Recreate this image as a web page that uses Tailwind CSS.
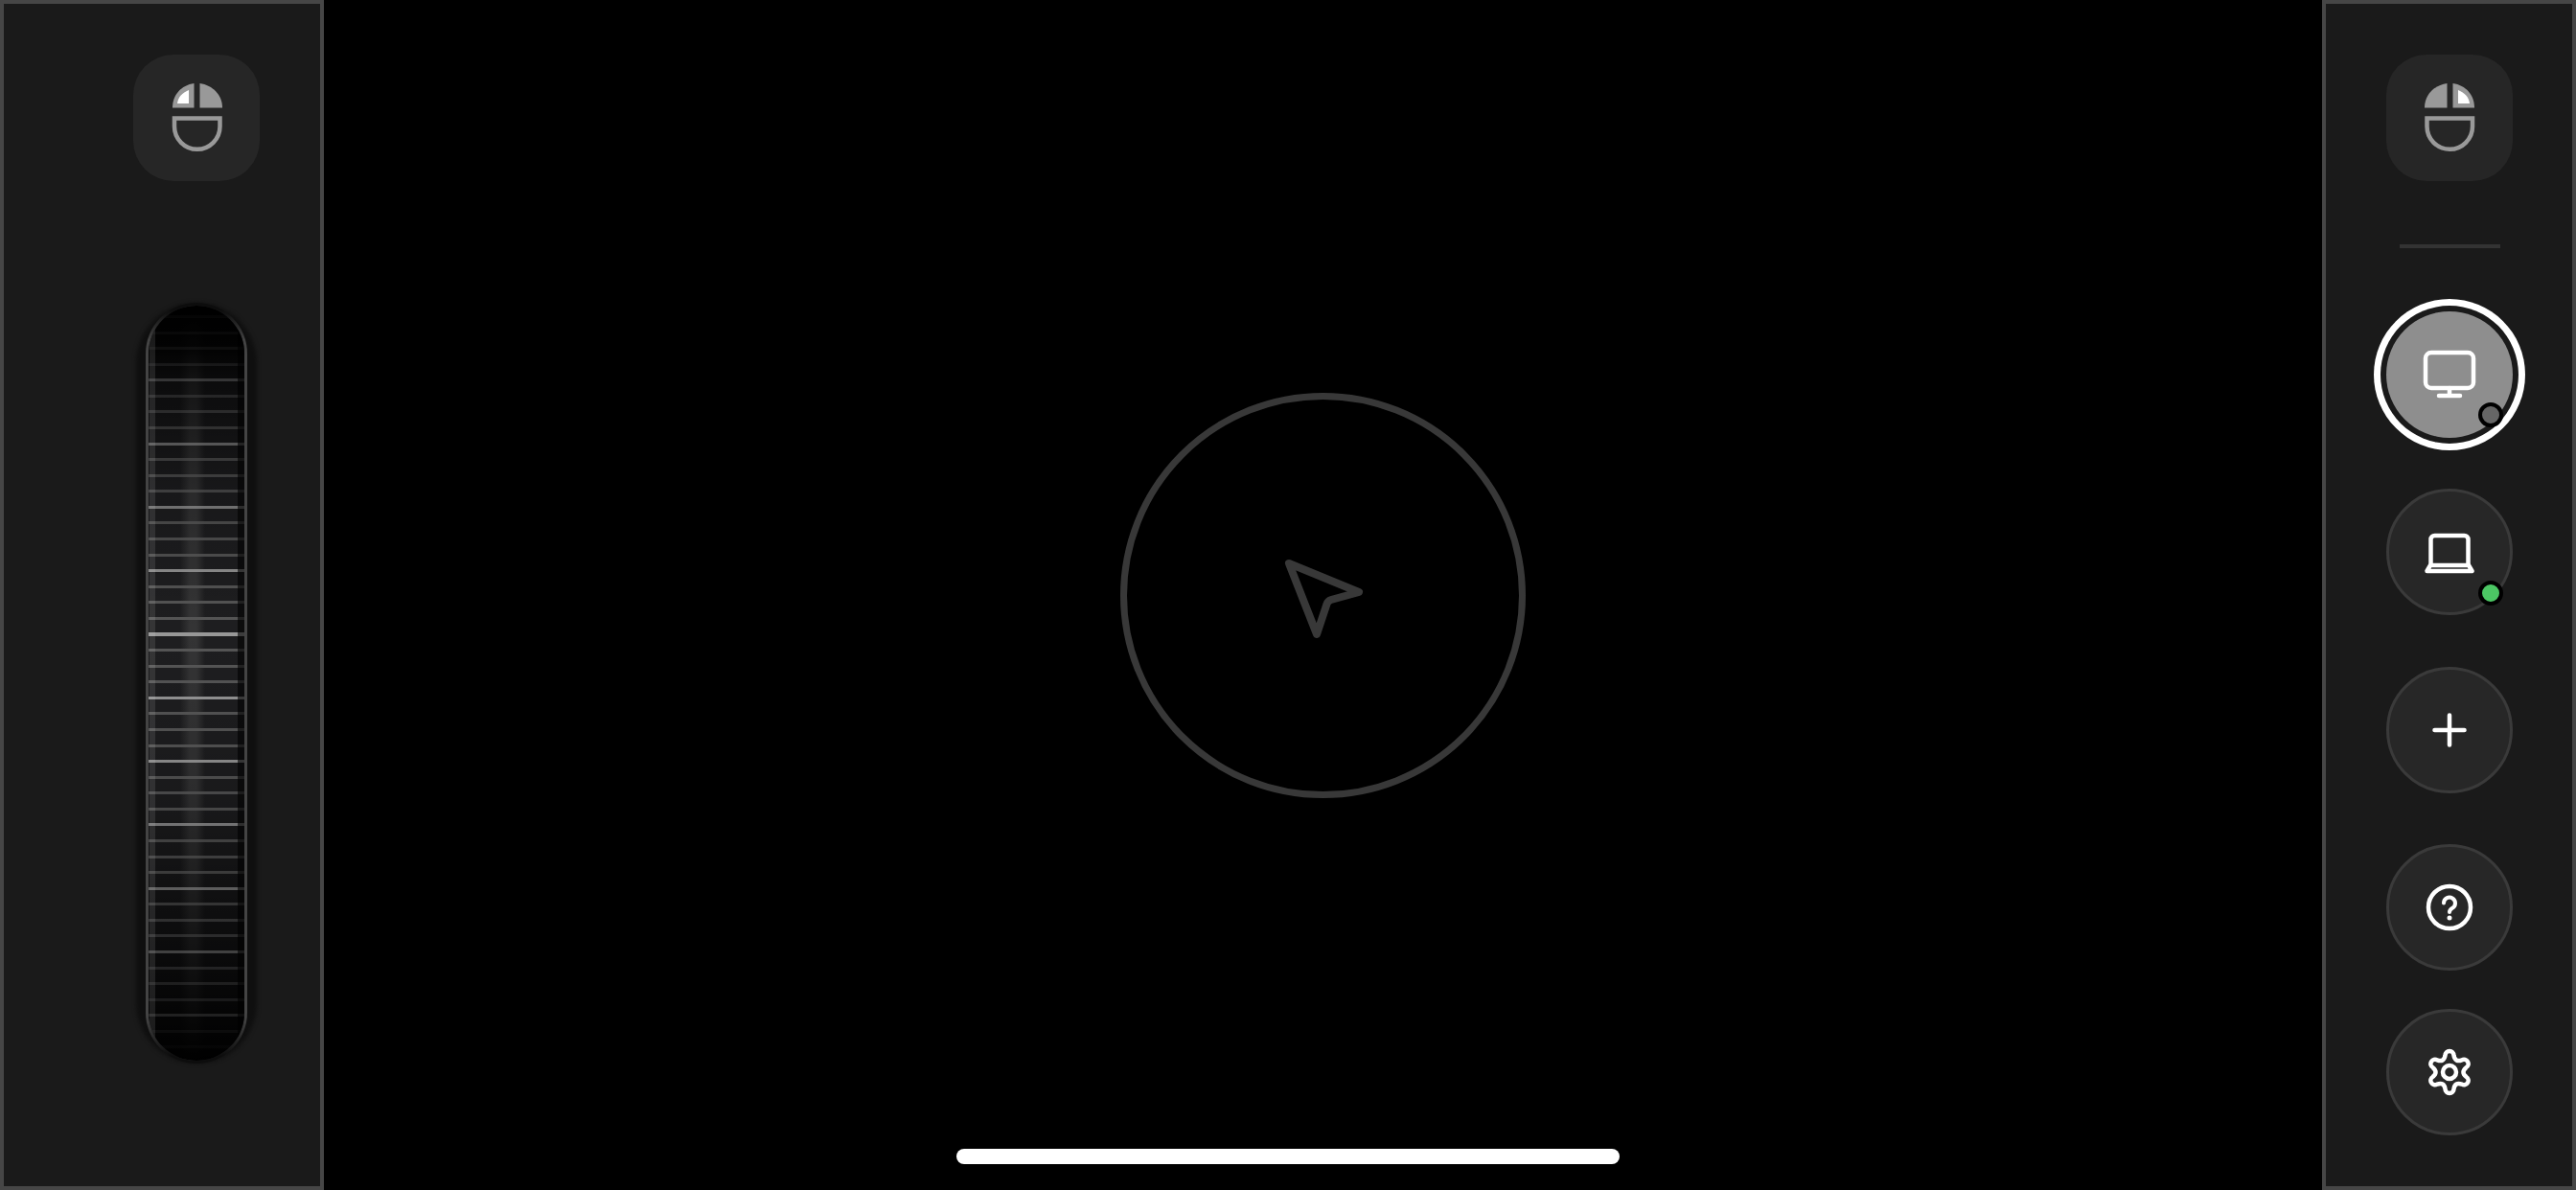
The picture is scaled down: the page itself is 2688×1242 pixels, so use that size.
<!DOCTYPE html>
<html>
<head>
<meta charset="utf-8">
<script src="https://cdn.jsdelivr.net/npm/@tailwindcss/browser@4"></script>
</head>
<body class="bg-black">
<div class="relative flex h-[1242px] w-[2688px] overflow-hidden bg-black">

  <aside class="flex h-full w-[338px] shrink-0 flex-col border-4 border-[#464646] bg-[#1a1a1a] pl-[135px] pt-[53px]">
    <div class="h-[132px] w-[132px] rounded-[42px] bg-[#262626]">
      <svg class="h-[132px] w-[132px]" viewBox="0 0 132 132">
        <g transform="translate(41 30)">
          <path fill="#999" d="M0 25.5C0 12 9 2 22.5 0V25.5Z"/>
          <path fill="#999" d="M28.5 0C42 2 52 12 52 25.5H28.5Z"/>
          <path fill="#fff" d="M5 21C6 14 10 10 17 7V21Z"/>
          <path fill="none" stroke="#999" stroke-width="4.5" d="M2 36.5H49.5V45A23.75 23.75 0 0 1 2 45Z"/>
        </g>
      </svg>
    </div>
    <div class="relative mt-[127px] ml-[13px] h-[794px] w-[106px]">
      <div class="absolute -inset-x-[10px] inset-y-0 rounded-full bg-[#0f0f0f] blur-[2px]"></div>
      <div class="absolute inset-0 overflow-hidden rounded-full bg-[linear-gradient(to_bottom,#0d0d0d_0,#0d0d0d_1%,#444_5%,#444_94%,#0d0d0d_99%,#0d0d0d_100%)] p-[3px]">
        <div class="relative h-full w-full overflow-hidden rounded-full bg-[linear-gradient(to_right,#1e1e20_0,#1e1e20_33%,#343435_43%,#343435_50%,#1e1e20_59%,#1e1e20_100%)]">
          <div class="absolute inset-0 bg-[linear-gradient(to_bottom,#000_0,#000_1%,rgba(0,0,0,.9)_6%,rgba(0,0,0,.62)_10%,rgba(0,0,0,.2)_25%,rgba(0,0,0,0)_43%,rgba(0,0,0,.15)_64%,rgba(0,0,0,.45)_77%,rgba(0,0,0,.8)_92%,#000_100%)]"></div>
          <div class="absolute inset-0 [mask-image:linear-gradient(to_bottom,rgba(0,0,0,0)_0,rgba(0,0,0,.15)_6%,rgba(0,0,0,.3)_10%,rgba(0,0,0,.5)_18%,rgba(0,0,0,.7)_28%,#000_43%,rgba(0,0,0,.85)_60%,rgba(0,0,0,.55)_78%,rgba(0,0,0,.4)_85%,rgba(0,0,0,.25)_92%,rgba(0,0,0,0)_100%)]">
            <div class="absolute inset-x-0 bottom-0 top-[10px] bg-[repeating-linear-gradient(to_bottom,#565656_0,#565656_3px,transparent_3px,transparent_16.575px)]"></div>
            <div class="absolute inset-x-0 bottom-0 top-[10px] bg-[repeating-linear-gradient(to_bottom,#989898_0,#989898_3px,transparent_3px,transparent_66.3px)]"></div>
          </div>
          <div class="absolute inset-y-0 left-[1px] w-[6px] bg-white/10"></div>
          <div class="absolute inset-y-0 right-0 w-[7px] bg-black/60"></div>
        </div>
      </div>
    </div>
  </aside>

  <main class="flex flex-1 items-center justify-center">
    <div class="flex h-[423px] w-[423px] items-center justify-center rounded-full border-[7px] border-[#383838]">
      <svg class="h-[120px] w-[120px]" viewBox="0 0 120 120" fill="none" stroke="#383838" stroke-width="8" stroke-linejoin="round">
        <path d="M24 27L97 57L68 65Q64.500 66 63.500 69.500L53 101Z"/>
      </svg>
    </div>
  </main>

  <aside class="flex h-full w-[265px] shrink-0 flex-col items-center border-4 border-[#464646] bg-[#1a1a1a] pl-[63px] pr-[62px] pt-[53px]">
    <div class="h-[132px] w-[132px] shrink-0 rounded-[42px] bg-[#262626]">
      <svg class="h-[132px] w-[132px]" viewBox="0 0 132 132">
        <g transform="translate(92 30) scale(-1 1)">
          <path fill="#999" d="M0 25.5C0 12 9 2 22.5 0V25.5Z"/>
          <path fill="#999" d="M28.5 0C42 2 52 12 52 25.5H28.5Z"/>
          <path fill="#fff" d="M5 21C6 14 10 10 17 7V21Z"/>
          <path fill="none" stroke="#999" stroke-width="4.5" d="M2 36.5H49.5V45A23.75 23.75 0 0 1 2 45Z"/>
        </g>
      </svg>
    </div>

    <div class="mt-[66px] h-[4px] w-[105px] shrink-0 bg-[#333]"></div>

    <div class="relative mt-[66px] flex h-[132px] w-[132px] shrink-0 items-center justify-center rounded-full bg-[#8e8e8e] shadow-[0_0_0_6px_#1a1a1a,0_0_0_13px_#fff]">
      <svg class="h-[64px] w-[64px]" viewBox="-32 -32 64 64" fill="none" stroke="#fff" stroke-width="4.5" stroke-linecap="round" stroke-linejoin="round">
        <rect x="-25" y="-23" width="50" height="37" rx="6"/>
        <path d="M0 14V22M-11 22H11"/>
      </svg>
      <span class="absolute left-[96px] top-[95px] h-[26px] w-[26px] rounded-full border-4 border-black bg-[#666]"></span>
    </div>

    <div class="relative mt-[53px] flex h-[132px] w-[132px] shrink-0 items-center justify-center rounded-full border-[3px] border-[#3a3a3a] bg-[#272727]">
      <svg class="h-[64px] w-[64px]" viewBox="-32 -32 64 64" fill="none" stroke="#fff" stroke-width="4.5" stroke-linecap="round" stroke-linejoin="round">
        <path d="M-19.5 14V-13A4 4 0 0 1 -15.5 -17H15.5A4 4 0 0 1 19.5 -13V14"/>
        <path d="M-20 14H20L23.5 20H-23.5Z"/>
      </svg>
      <span class="absolute left-[93px] top-[93px] h-[26px] w-[26px] rounded-full border-4 border-black bg-[#4cc764]"></span>
    </div>

    <div class="mt-[54px] flex h-[132px] w-[132px] shrink-0 items-center justify-center rounded-full border-[3px] border-[#3a3a3a] bg-[#272727]">
      <svg class="h-[64px] w-[64px]" viewBox="-32 -32 64 64" fill="none" stroke="#fff" stroke-width="4.5" stroke-linecap="round">
        <path d="M-15.500 0H15.500M0 -15.500V15.500"/>
      </svg>
    </div>

    <div class="mt-[53px] flex h-[132px] w-[132px] shrink-0 items-center justify-center rounded-full border-[3px] border-[#3a3a3a] bg-[#272727]">
      <svg class="h-[64px] w-[64px]" viewBox="-32 -32 64 64" fill="none" stroke="#fff" stroke-linecap="round">
        <circle r="22" stroke-width="4.5"/>
        <path stroke-width="4" d="M-6 -4.500A6 6 0 1 1 3 .800C1 2 0 3 0 5"/>
        <circle cy="11" r="2.500" fill="#fff" stroke="none"/>
      </svg>
    </div>

    <div class="mt-[40px] flex h-[132px] w-[132px] shrink-0 items-center justify-center rounded-full border-[3px] border-[#3a3a3a] bg-[#272727]">
      <svg class="h-[64px] w-[64px]" viewBox="-32 -32 64 64" fill="none" stroke="#fff" stroke-width="4.5" stroke-linejoin="round">
        <path d="M-4.5 -17.5A4.5 4.5 0 0 1 4.5 -17.5Q5.75 -9.96 12.905 -12.647A4.5 4.5 0 0 1 17.405 -4.853Q11.5 0 17.405 4.853A4.5 4.5 0 0 1 12.905 12.647Q5.75 9.96 4.5 17.5A4.5 4.5 0 0 1 -4.5 17.5Q-5.75 9.96 -12.905 12.647A4.5 4.5 0 0 1 -17.405 4.853Q-11.5 0 -17.405 -4.853A4.5 4.5 0 0 1 -12.905 -12.647Q-5.75 -9.96 -4.5 -17.5Z"/>
        <circle r="7"/>
      </svg>
    </div>
  </aside>

  <div class="absolute bottom-[27px] left-[998px] h-[16px] w-[692px] rounded-full bg-white"></div>
</div>
</body>
</html>
